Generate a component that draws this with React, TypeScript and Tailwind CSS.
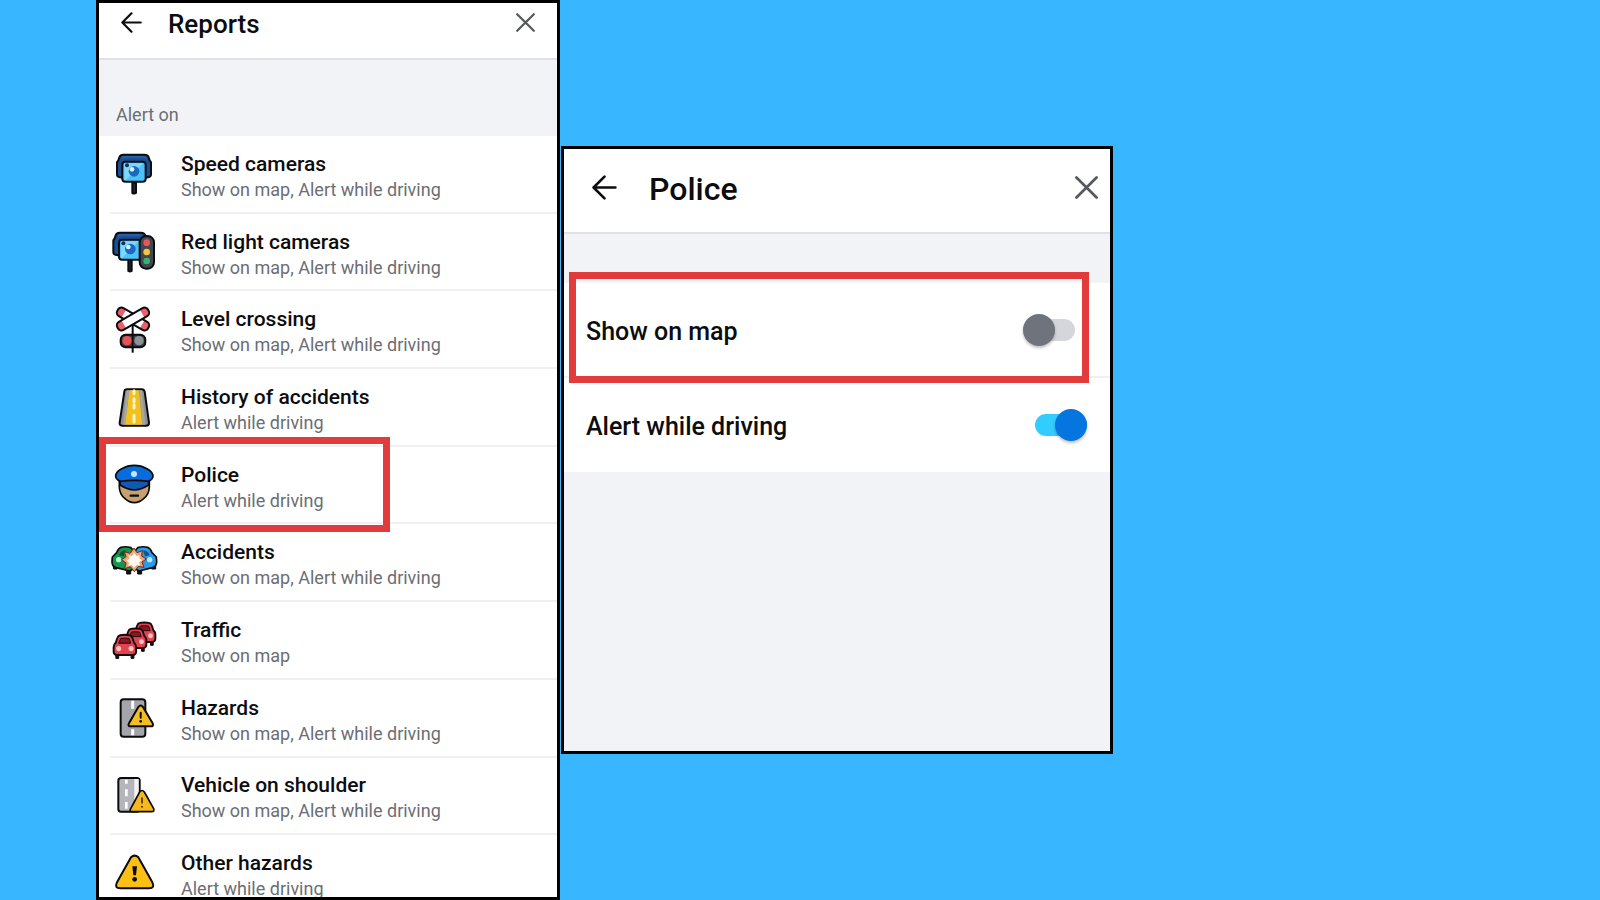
import { useState, type ReactNode } from "react";

function SpeedCameraIcon() {
  return (
    <svg viewBox="42 30 144 144" className="size-12 shrink-0" stroke="#0b0d12" strokeWidth="6" strokeLinejoin="round" aria-hidden="true">
      <path d="M82 44h64q9 0 12 8l3 9 4 6v36q0 7-6 8l-10 2H79l-10-2q-6-1-6-8V67l4-6 3-9q3-8 12-8Z" fill="#1b4f93" />
      <path d="M77 55q3-4 9-4h56q6 0 9 4" fill="none" stroke="#2a66b3" strokeWidth="4" />
      <path d="M109 128h11v31q-5 3-11 0Z" fill="#23262b" />
      <rect x="79" y="65" width="70" height="60" rx="9" fill="#4cc3f7" />
      <path d="M85 70h57L89 120h-4Z" fill="#7fd8fb" stroke="none" />
      <circle cx="114" cy="94" r="16" fill="#1c68bd" stroke="none" />
      <circle cx="108" cy="88" r="7" fill="#d9f3ff" stroke="none" />
      <circle cx="93" cy="76" r="6" fill="#10305a" stroke="none" />
    </svg>
  );
}

function RedLightCameraIcon() {
  return (
    <svg viewBox="42 263 144 144" className="size-12 shrink-0" stroke="#0b0d12" strokeWidth="6" strokeLinejoin="round" aria-hidden="true">
      <path d="M71 277h65q9 0 12 9v59H67l-9-2q-6-1-6-8v-35l4-6 3-9q3-8 12-8Z" fill="#1b4f93" />
      <path d="M66 288q3-4 9-4h58" fill="none" stroke="#2a66b3" strokeWidth="4" />
      <path d="M97 360h10v32q-5 3-10 0Z" fill="#23262b" />
      <rect x="69" y="298" width="68" height="60" rx="9" fill="#4cc3f7" />
      <path d="M75 303h53L79 353h-4Z" fill="#7fd8fb" stroke="none" />
      <circle cx="103" cy="326" r="16" fill="#1c68bd" stroke="none" />
      <circle cx="97" cy="320" r="7" fill="#d9f3ff" stroke="none" />
      <circle cx="82" cy="309" r="6" fill="#10305a" stroke="none" />
      <rect x="131" y="287" width="43" height="98" rx="19" fill="#43484d" />
      <circle cx="152" cy="307" r="10" fill="#e5555b" stroke="none" />
      <circle cx="152" cy="335" r="10" fill="#f6c344" stroke="none" />
      <circle cx="152" cy="362" r="10" fill="#36b277" stroke="none" />
    </svg>
  );
}

function CrossingBoard({ transform }: { transform: string }) {
  return (
    <g transform={transform}>
      <rect x="-53" y="-14" width="106" height="28" rx="12" fill="#fff" stroke="none" />
      <path d="M-32-14h-9q-12 0-12 12v4q0 12 12 12h9ZM32-14h9q12 0 12 12v4q0 12-12 12H32Z" fill="#e8606a" stroke="none" />
      <rect x="-53" y="-14" width="106" height="28" rx="12" fill="none" />
    </g>
  );
}

function LevelCrossingIcon() {
  return (
    <svg viewBox="42 46 144 144" className="size-12 shrink-0" stroke="#0b0b0c" strokeWidth="6" strokeLinejoin="round" aria-hidden="true">
      <path d="M110 98v91" />
      <CrossingBoard transform="translate(111 88) rotate(30)" />
      <CrossingBoard transform="translate(111 88) rotate(-30)" />
      <rect x="74" y="135" width="74" height="38" rx="15" fill="#3e4146" />
      <circle cx="93" cy="153" r="14" fill="#ec4f55" stroke="none" />
      <circle cx="129" cy="153" r="14" fill="#8d9096" stroke="none" />
      <path d="M110 135v38" strokeWidth="5" />
    </svg>
  );
}

function AccidentHistoryIcon() {
  return (
    <svg viewBox="42 280 144 144" className="size-12 shrink-0" strokeLinejoin="round" aria-hidden="true">
      <path d="M93 299h44q7 0 9 7l13 93q0 9-8 9H78q-8 0-7-9l14-93q1-7 8-7Z" fill="#8f9197" stroke="#0b0b0c" strokeWidth="6" />
      <path d="M100 302h29l10 103H87Z" fill="#f3c11d" />
      <path d="M92 302h8L87 405h-6ZM130 302h8l10 103h-9Z" fill="#a9a79a" />
      <path d="M114 303v9M114 327v9M114 345v10M114 377v20" stroke="#fff5c9" strokeWidth="9" strokeLinecap="round" />
    </svg>
  );
}

function PoliceIcon() {
  return (
    <svg viewBox="42 93 144 144" className="size-12 shrink-0" stroke="#0b0b0c" strokeWidth="5" strokeLinejoin="round" aria-hidden="true">
      <path d="M70 150v20q0 22 17 36 13 12 28 12t28-12q17-14 17-36v-20Z" fill="#c79f70" />
      <path d="M72 153q42-8 86 0v12q-24 15-43 15t-43-15Z" fill="#1259b5" />
      <path d="M59 138q0-12 18-22 18-10 38-10t38 10q18 10 18 22 0 9-13 16-43-6-86 0-13-7-13-16Z" fill="#0a6bdc" />
      <circle cx="114" cy="132" r="9" fill="#bfe8ff" stroke="none" />
      <path d="M104 197h22" strokeWidth="7" strokeLinecap="round" />
    </svg>
  );
}

function AccidentsIcon() {
  return (
    <svg viewBox="42 327 144 144" className="size-12 shrink-0" stroke="#0b0b0c" strokeWidth="5" strokeLinejoin="round" aria-hidden="true">
      <path d="M51 408h12v12H53ZM92 422h12v13H92ZM125 422h12v13h-12ZM167 408h12v12h-12Z" fill="#111" strokeWidth="3" />
      <path d="M75 355q14-4 30 1l10 12v50l-14 8-40-10q-13-4-13-18l1-14 13-13q4-12 13-16Z" fill="#18934f" />
      <path d="M155 355q-14-4-30 1l-10 12v50l14 8 40-10q13-4 13-18l-1-14-13-13q-4-12-13-16Z" fill="#2a9be4" />
      <path d="M69 379q4-14 20-15l-6 18Z" fill="#0d5236" stroke="none" />
      <path d="M161 379q-4-14-20-15l6 18Z" fill="#12528f" stroke="none" />
      <circle cx="68" cy="392" r="8" fill="#a9f5cf" stroke="none" />
      <circle cx="161" cy="392" r="8" fill="#b5e8ff" stroke="none" />
      <path d="m114 357 9 14 16-6-2 16 14 9-13 9 6 16-17-3-12 16-12-15-17 6 4-17-13-10 13-9-5-15 17 5Z" fill="#f2a375" stroke="#6c2a16" strokeWidth="3" />
      <path d="m114 370 7 11 10-3-1 10 8 6-9 6 3 10-10-2-8 9-7-9-10 4 2-11-8-7 9-5-3-10 11 2Z" fill="#fff8ef" stroke="none" />
    </svg>
  );
}

function Car({ transform }: { transform: string }) {
  return (
    <g transform={transform}>
      <path d="M9 60h9v15H9ZM57 60h9v15h-9Z" fill="#111" strokeWidth="3" />
      <path d="M22 2Q37-1 52 2q7 1 10 10l4 13q7 6 7 15v13q0 10-9 11H11q-9-1-9-11V40q0-9 7-15l4-13Q16 3 22 2Z" fill="#e2434e" />
      <path d="M24 12q13-2 27 0l5 15H18Z" fill="#8e1523" strokeWidth="3" />
      <circle cx="18" cy="44" r="8" fill="#ffc4c0" stroke="none" />
      <circle cx="57" cy="44" r="8" fill="#ffc4c0" stroke="none" />
    </g>
  );
}

function TrafficIcon() {
  return (
    <svg viewBox="42 50 144 144" className="size-12 shrink-0" stroke="#14090b" strokeWidth="6" strokeLinejoin="round" aria-hidden="true">
      <Car transform="translate(111 69) scale(.92)" />
      <Car transform="translate(84 87) scale(.92)" />
      <Car transform="translate(51 106) scale(.95)" />
    </svg>
  );
}

function HazardsIcon() {
  return (
    <svg viewBox="42 283 144 144" className="size-12 shrink-0" stroke="#0b0b0c" strokeWidth="6" strokeLinejoin="round" aria-hidden="true">
      <rect x="74" y="299" width="74" height="112" rx="9" fill="#a3a5ab" />
      <path d="M110 303v24M110 389v18" stroke="#fff" strokeWidth="9" />
      <path d="M127 322q7-9 14 0l29 49q4 9-6 9h-59q-11 0-6-9Z" fill="#f6bd1f" />
      <path d="M134 339v15" strokeLinecap="round" />
      <circle cx="134" cy="365" r="4" fill="#0b0b0c" stroke="none" />
    </svg>
  );
}

function ShoulderIcon() {
  return (
    <svg viewBox="42 67 144 144" className="size-12 shrink-0" stroke="#0b0b0c" strokeWidth="6" strokeLinejoin="round" aria-hidden="true">
      <rect x="67" y="88" width="64" height="101" rx="8" fill="#b5b6bb" />
      <path d="M115 91h13v95h-13Z" fill="#f4f4f6" stroke="none" />
      <path d="M91 93v12M91 122v21M91 160v20" stroke="#fff" strokeWidth="8" />
      <path d="M131 130q7-9 14 0l28 50q3 9-6 9h-58q-10 0-5-9Z" fill="#f6b81c" strokeWidth="5" />
      <path d="M138 148v14" stroke="#4a3206" strokeWidth="5" strokeLinecap="round" />
      <circle cx="138" cy="174" r="3" fill="#4a3206" stroke="none" />
    </svg>
  );
}

function OtherHazardsIcon() {
  return (
    <svg viewBox="42 300 144 144" className="size-12 shrink-0" stroke="#0b0b0c" strokeWidth="6" strokeLinejoin="round" aria-hidden="true">
      <path d="M105 325q11-10 22 0l42 75q9 18-10 18H73q-19 0-10-18Z" fill="#fbc013" />
      <path d="M109 352h14l-3 27h-8Z" fill="#0b0b0c" stroke="none" />
      <circle cx="116" cy="391" r="7" fill="#0b0b0c" stroke="none" />
    </svg>
  );
}

type Report = { title: string; status: string; icon: ReactNode; marked?: boolean };

const both = "Show on map, Alert while driving";

const reports: Report[] = [
  { title: "Speed cameras", status: both, icon: <SpeedCameraIcon /> },
  { title: "Red light cameras", status: both, icon: <RedLightCameraIcon /> },
  { title: "Level crossing", status: both, icon: <LevelCrossingIcon /> },
  { title: "History of accidents", status: "Alert while driving", icon: <AccidentHistoryIcon /> },
  { title: "Police", status: "Alert while driving", icon: <PoliceIcon />, marked: true },
  { title: "Accidents", status: both, icon: <AccidentsIcon /> },
  { title: "Traffic", status: "Show on map", icon: <TrafficIcon /> },
  { title: "Hazards", status: both, icon: <HazardsIcon /> },
  { title: "Vehicle on shoulder", status: both, icon: <ShoulderIcon /> },
  { title: "Other hazards", status: "Alert while driving", icon: <OtherHazardsIcon /> },
];

function BackArrow({ className }: { className: string }) {
  return (
    <svg viewBox="0 0 24 24" className={className} fill="none" stroke="#0c0d0f" strokeWidth="2.5" strokeLinecap="round" strokeLinejoin="round" aria-hidden="true">
      <path d="M12 1.5 1.5 12 12 22.5M1.5 12h21" />
    </svg>
  );
}

function Cross({ className }: { className: string }) {
  return (
    <svg viewBox="0 0 24 24" className={className} fill="none" stroke="#55585c" strokeWidth="2.8" strokeLinecap="round" aria-hidden="true">
      <path d="m1.5 1.5 21 21M22.5 1.5l-21 21" />
    </svg>
  );
}

const switchBase =
  "relative h-8 w-[52px] shrink-0 cursor-pointer appearance-none before:absolute before:inset-x-0 before:top-[5px] before:h-[22px] before:rounded-full before:bg-[#d5d6db] after:absolute after:left-0 after:top-0 after:size-8 after:rounded-full after:bg-[#6f747c] after:shadow-[0_2px_3px_rgba(0,0,0,0.25)] checked:before:bg-[#33ccff] checked:after:left-5 checked:after:bg-[#0575e0]";

export default function App() {
  const [showOnMap, setShowOnMap] = useState(false);
  const [alertDriving, setAlertDriving] = useState(true);

  return (
    <main className="flex h-screen items-start gap-px overflow-hidden bg-[#38b6ff] pl-[6vw] font-['Roboto',sans-serif] text-[#0c0d0f]">
      <section className="flex h-full w-[29vw] shrink-0 flex-col overflow-hidden border-[3px] border-black bg-white" aria-label="Reports">
        <header className="flex h-[55px] shrink-0 items-center pb-4 pl-[22px] pr-[22px]">
          <button type="button" aria-label="Back">
            <BackArrow className="size-[21px]" />
          </button>
          <h1 className="ml-[26px] flex-1 pt-0.5 text-[26px] leading-8 font-medium">Reports</h1>
          <button type="button" aria-label="Close">
            <Cross className="size-[19px]" />
          </button>
        </header>
        <div className="flex h-[78px] shrink-0 items-end border-t-2 border-[#dfe1e4] bg-[#f2f3f7] pb-[9px] pl-[17px]">
          <h2 className="text-lg leading-6 text-[#6b6e73]">Alert on</h2>
        </div>
        <ul className="-mb-4 ml-[11px] grid flex-1 auto-rows-fr">
          {reports.map((report) => (
            <li key={report.title} className="relative border-b-2 border-[#f0f0f2]">
              <button type="button" className="flex h-full w-full items-center gap-[23px] text-left">
                {report.icon}
                <span className="flex flex-col pt-1.5">
                  <span className="text-[21px] leading-[26px] font-medium">{report.title}</span>
                  <span className="text-lg leading-[26px] text-[#6b6e73]">{report.status}</span>
                </span>
              </button>
              {report.marked && (
                <span className="pointer-events-none absolute -top-2.5 -left-[11px] z-10 h-[95px] w-[291px] border-7 border-[#e23b3c]" />
              )}
            </li>
          ))}
        </ul>
      </section>

      <section className="mt-[146px] flex h-[67.5vh] w-[34.5vw] shrink-0 flex-col overflow-hidden border-[3px] border-black bg-[#f2f3f7]" aria-label="Police">
        <header className="flex h-[85px] shrink-0 items-center border-b-2 border-[#dfe1e4] bg-white pb-1.5 pl-7 pr-3">
          <button type="button" aria-label="Back">
            <BackArrow className="size-[25px]" />
          </button>
          <h2 className="ml-8 flex-1 pt-0.5 text-[32px] leading-9 font-medium">Police</h2>
          <button type="button" aria-label="Close">
            <Cross className="size-[23px]" />
          </button>
        </header>
        <div className="mt-[49px] bg-white">
          <div className="relative flex h-[95px] items-center justify-between border-b-2 border-[#f0f0f2] pl-[22px] pr-[35px]">
            <label htmlFor="show-on-map" className="pt-1 text-[25px] leading-8 font-medium">Show on map</label>
            <input id="show-on-map" type="checkbox" role="switch" checked={showOnMap} onChange={(e) => setShowOnMap(e.target.checked)} className={switchBase} />
            <span className="pointer-events-none absolute -top-[11px] right-[21px] left-[5px] h-[111px] border-7 border-[#e23b3c]" />
          </div>
          <div className="flex h-[94px] items-center justify-between pl-[22px] pr-[23px]">
            <label htmlFor="alert-driving" className="pt-1 text-[25px] leading-8 font-medium">Alert while driving</label>
            <input id="alert-driving" type="checkbox" role="switch" checked={alertDriving} onChange={(e) => setAlertDriving(e.target.checked)} className={switchBase} />
          </div>
        </div>
      </section>
    </main>
  );
}
